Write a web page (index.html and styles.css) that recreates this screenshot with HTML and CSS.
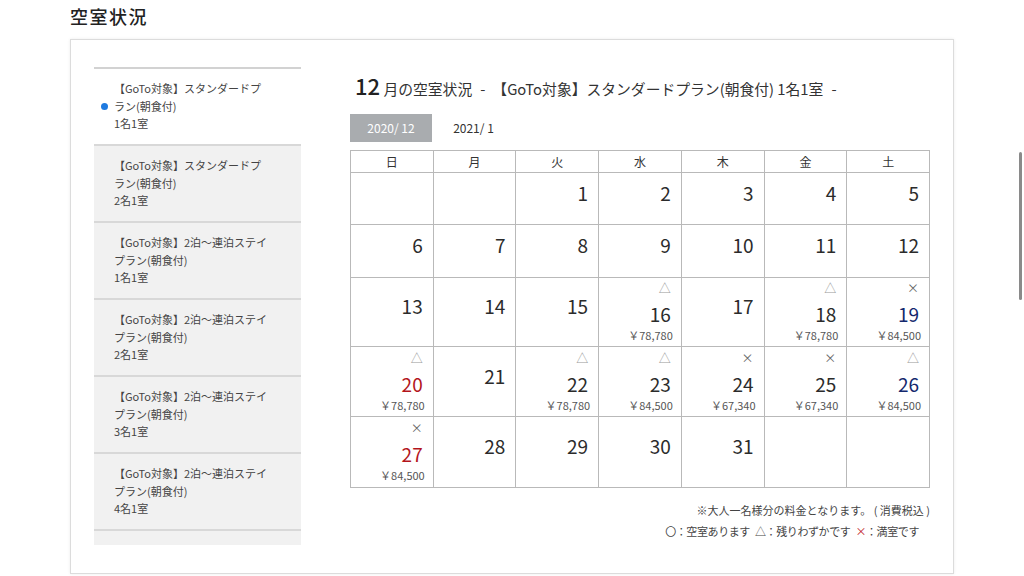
FILE: index.html
```html
<!DOCTYPE html>
<html lang="ja">
<head>
<meta charset="utf-8">
<title>空室状況</title>
<link rel="stylesheet" href="styles.css">
</head>
<body>
<h1 class="title">空室状況</h1>
<div class="box">
  <ul class="plans">
    <li class="plan active">【GoTo対象】スタンダードプ<br>ラン(朝食付)<br>1名1室</li>
    <li class="plan">【GoTo対象】スタンダードプ<br>ラン(朝食付)<br>2名1室</li>
    <li class="plan">【GoTo対象】2泊～連泊ステイ<br>プラン(朝食付)<br>1名1室</li>
    <li class="plan">【GoTo対象】2泊～連泊ステイ<br>プラン(朝食付)<br>2名1室</li>
    <li class="plan">【GoTo対象】2泊～連泊ステイ<br>プラン(朝食付)<br>3名1室</li>
    <li class="plan">【GoTo対象】2泊～連泊ステイ<br>プラン(朝食付)<br>4名1室</li>
  </ul>
  <div class="cal">
    <div class="cal-head"><span class="month">12</span> 月の空室状況<span class="dash">-</span>【GoTo対象】スタンダードプラン(朝食付) 1名1室<span class="dash">-</span></div>
    <div class="tabs">
      <div class="tab on">2020/ 12</div>
      <div class="tab">2021/ 1</div>
    </div>
    <div class="grid">
      <div class="dow">日</div><div class="dow">月</div><div class="dow">火</div><div class="dow">水</div><div class="dow">木</div><div class="dow">金</div><div class="dow">土</div>

      <div class="cell"></div>
      <div class="cell"></div>
      <div class="cell"><span class="num">1</span></div>
      <div class="cell"><span class="num">2</span></div>
      <div class="cell"><span class="num">3</span></div>
      <div class="cell"><span class="num">4</span></div>
      <div class="cell"><span class="num">5</span></div>

      <div class="cell"><span class="num">6</span></div>
      <div class="cell"><span class="num">7</span></div>
      <div class="cell"><span class="num">8</span></div>
      <div class="cell"><span class="num">9</span></div>
      <div class="cell"><span class="num">10</span></div>
      <div class="cell"><span class="num">11</span></div>
      <div class="cell"><span class="num">12</span></div>

      <div class="cell"><span class="num">13</span></div>
      <div class="cell"><span class="num">14</span></div>
      <div class="cell"><span class="num">15</span></div>
      <div class="cell full"><span class="sym tri">△</span><span class="num">16</span><span class="price">￥78,780</span></div>
      <div class="cell"><span class="num">17</span></div>
      <div class="cell full"><span class="sym tri">△</span><span class="num">18</span><span class="price">￥78,780</span></div>
      <div class="cell full"><span class="sym">×</span><span class="num sat">19</span><span class="price">￥84,500</span></div>

      <div class="cell full"><span class="sym tri">△</span><span class="num sun">20</span><span class="price">￥78,780</span></div>
      <div class="cell"><span class="num">21</span></div>
      <div class="cell full"><span class="sym tri">△</span><span class="num">22</span><span class="price">￥78,780</span></div>
      <div class="cell full"><span class="sym tri">△</span><span class="num">23</span><span class="price">￥84,500</span></div>
      <div class="cell full"><span class="sym">×</span><span class="num">24</span><span class="price">￥67,340</span></div>
      <div class="cell full"><span class="sym">×</span><span class="num">25</span><span class="price">￥67,340</span></div>
      <div class="cell full"><span class="sym tri">△</span><span class="num sat">26</span><span class="price">￥84,500</span></div>

      <div class="cell full"><span class="sym">×</span><span class="num sun">27</span><span class="price">￥84,500</span></div>
      <div class="cell"><span class="num">28</span></div>
      <div class="cell"><span class="num">29</span></div>
      <div class="cell"><span class="num">30</span></div>
      <div class="cell"><span class="num">31</span></div>
      <div class="cell"></div>
      <div class="cell"></div>
    </div>
    <p class="note">※大人一名様分の料金となります。 ( 消費税込 )</p>
    <p class="legend">〇：空室あります<span class="gap"></span>△：残りわずかです<span class="gap"></span><span class="x">×</span>：満室です</p>
  </div>
</div>
<div class="scrollbar"></div>
</body>
</html>
```

FILE: styles.css
```css
* { box-sizing: border-box; }
html, body {
  margin: 0;
  padding: 0;
  background: #fff;
  font-family: "Noto Sans CJK JP", "Noto Sans", sans-serif;
  color: #333;
}
body { width: 1024px; height: 576px; overflow: hidden; }

.title {
  margin: 0;
  padding: 3px 0 0 70px;
  height: 39px;
  font-size: 18px;
  line-height: 26px;
  font-weight: 500;
  letter-spacing: 1.5px;
  color: #222;
}

.box {
  margin-left: 70px;
  width: 884px;
  height: 535px;
  border: 1px solid #dcdcdc;
  box-shadow: 0 0 3px rgba(0,0,0,0.08);
  display: flex;
  padding: 27px 22px 0 23px;
}

.plans {
  list-style: none;
  margin: 0;
  padding: 0 0 14px 0;
  width: 207px;
  height: 478px;
  background: #f1f1f1;
  border-top: 2px solid #d2d2d2;
  flex: none;
}
.plan {
  position: relative;
  padding: 11px 0 10px 20px;
  font-size: 11px;
  line-height: 17.5px;
  color: #444;
  border-bottom: 2px solid #d8d8d8;
  height: 77px;
}
.plan.active { background: #fff; }
.plan.active::before {
  content: "";
  position: absolute;
  left: 7px;
  top: 34px;
  width: 7px;
  height: 7px;
  border-radius: 50%;
  background: #1e7ae0;
}

.cal {
  margin-left: 49px;
  width: 580px;
  flex: none;
}
.cal-head {
  height: 36px;
  line-height: 36px;
  padding-left: 5px;
  font-size: 14.8px;
  color: #333;
  white-space: nowrap;
  margin-bottom: 11px;
}
.dash { margin: 0 7px 0 8px; }
.month {
  font-size: 22px;
  font-weight: 500;
  color: #222;
}

.tabs {
  display: flex;
  height: 28px;
  margin-bottom: 8px;
}
.tab {
  width: 83px;
  line-height: 28px;
  text-align: center;
  font-size: 12px;
  color: #333;
}
.tab.on {
  width: 82px;
  background: #a9acaf;
  color: #fff;
}

.grid {
  display: grid;
  grid-template-columns: repeat(7, 1fr);
  grid-template-rows: 22px 52px 53px 69px 70px 71px;
  border-left: 1px solid #b9b9b9;
  border-top: 1px solid #b9b9b9;
  width: 580px;
}
.dow, .cell {
  border-right: 1px solid #b9b9b9;
  border-bottom: 1px solid #b9b9b9;
}
.dow {
  font-size: 12px;
  line-height: 21px;
  text-align: center;
  color: #333;
}
.cell {
  display: flex;
  flex-direction: column;
  justify-content: center;
  align-items: flex-end;
  padding-right: 10px;
}
.num {
  display: block;
  font-size: 19px;
  line-height: 24px;
  color: #2b2b2b;
  padding-bottom: 12px;
}
.full .num { padding-bottom: 0; margin-top: 6px; }
.sym {
  display: block;
  font-size: 12px;
  line-height: 16px;
  color: #666;
}
.sym.tri { color: #999; }
.price {
  display: block;
  font-size: 11px;
  line-height: 18px;
  color: #555;
  margin-right: -2px;
}
.num.sun { color: #b3141c; }
.num.sat { color: #14286d; }

.note, .legend {
  margin: 0;
  font-size: 11px;
  line-height: 21px;
  color: #444;
  text-align: right;
}
.note { margin-top: 12px; }
.legend { padding-right: 11px; letter-spacing: -0.4px; }
.legend .gap { display: inline-block; width: 5px; }
.legend .x { color: #c0161e; }

.scrollbar {
  position: absolute;
  left: 1019px;
  top: 152px;
  width: 3px;
  height: 148px;
  border-radius: 2px;
  background: #8a8a8a;
}
```
